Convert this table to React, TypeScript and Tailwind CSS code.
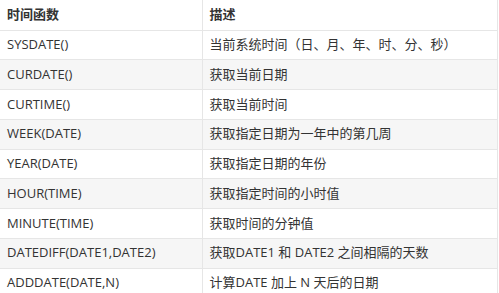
const rows: [string, string][] = [
  ["SYSDATE()", "当前系统时间（日、月、年、时、分、秒）"],
  ["CURDATE()", "获取当前日期"],
  ["CURTIME()", "获取当前时间"],
  ["WEEK(DATE)", "获取指定日期为一年中的第几周"],
  ["YEAR(DATE)", "获取指定日期的年份"],
  ["HOUR(TIME)", "获取指定时间的小时值"],
  ["MINUTE(TIME)", "获取时间的分钟值"],
  ["DATEDIFF(DATE1,DATE2)", "获取DATE1 和 DATE2 之间相隔的天数"],
  ["ADDDATE(DATE,N)", "计算DATE 加上 N 天后的日期"],
];

export default function App() {
  return (
    <div
      className="w-[499px] h-[293px] overflow-hidden bg-white text-[13px] text-[#333]"
      style={{ fontFamily: '"Open Sans", "Noto Sans CJK SC", sans-serif' }}
    >
      <table className="w-[498px] border-collapse table-fixed">
        <colgroup>
          <col className="w-[202px]" />
          <col />
        </colgroup>
        <thead>
          <tr className="h-[30px] bg-white">
            <th className="border border-[#e6e6e6] border-t-0 border-l-0 px-[7px] text-left font-bold">时间函数</th>
            <th className="border border-[#e6e6e6] border-t-0 px-[7px] text-left font-bold">描述</th>
          </tr>
        </thead>
        <tbody>
          {rows.map(([fn, desc], i) => (
            <tr key={fn} className={`h-[29.75px] ${i % 2 === 1 ? "bg-[#f6f6f6]" : "bg-white"}`}>
              <td className="border border-[#e6e6e6] border-l-0 px-[7px] whitespace-nowrap">{fn}</td>
              <td className="border border-[#e6e6e6] px-[7px] whitespace-nowrap">{desc}</td>
            </tr>
          ))}
        </tbody>
      </table>
    </div>
  );
}
